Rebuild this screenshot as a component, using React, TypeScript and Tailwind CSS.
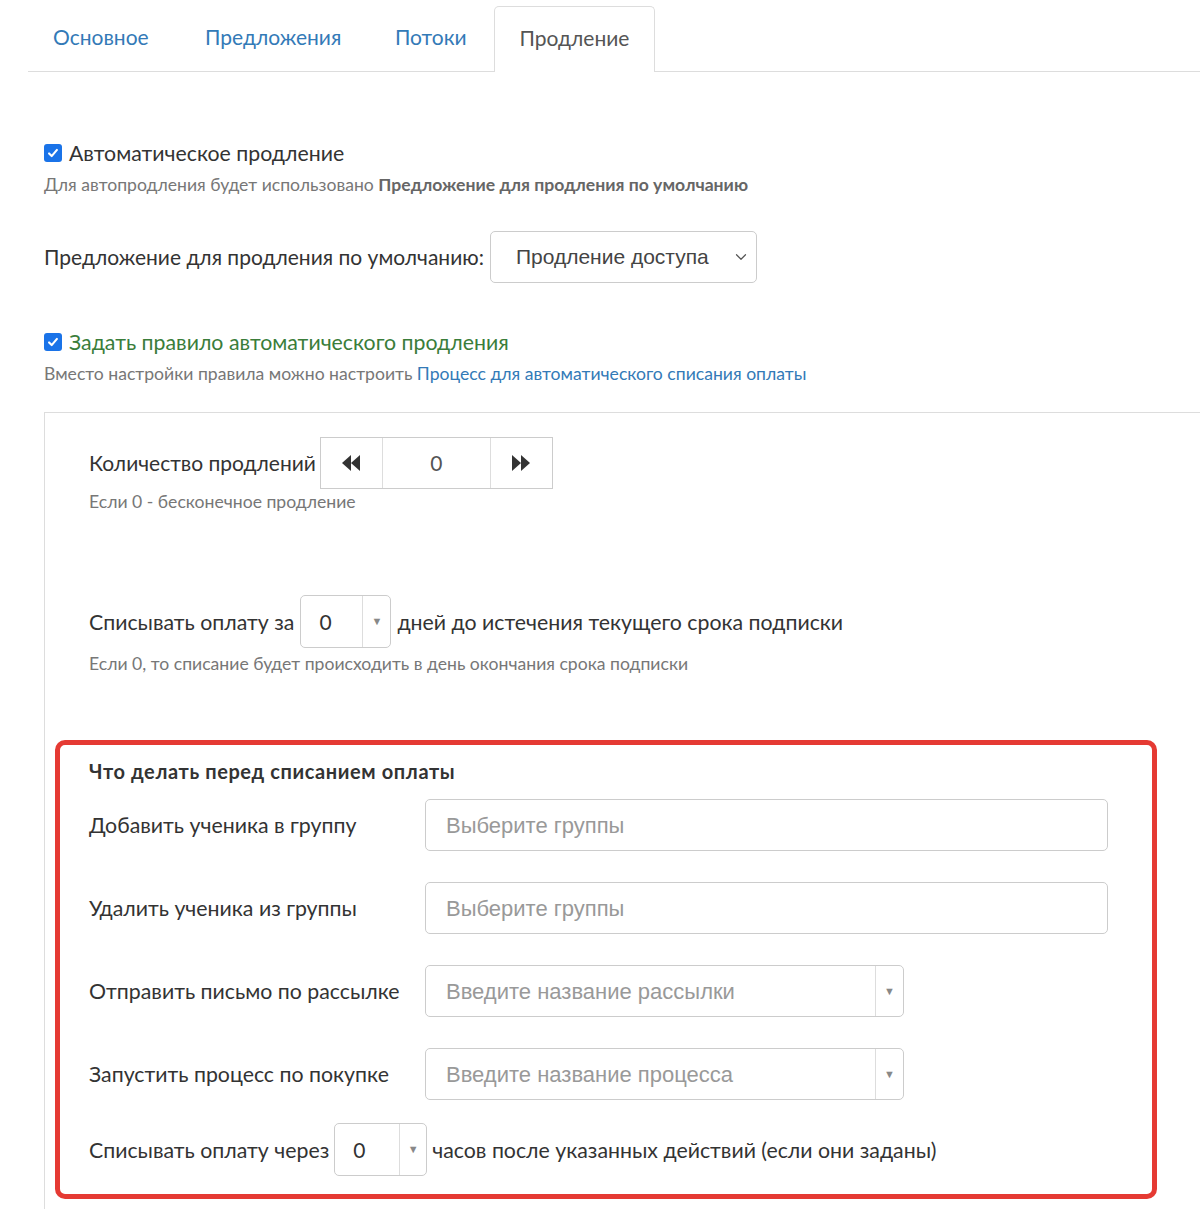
import { ChevronDown } from "lucide-react";

const FONT = { fontFamily: "Lato, 'Noto Sans', sans-serif" };
const ARIAL = { fontFamily: "'Liberation Sans', Arial, sans-serif" };

function Check() {
  return (
    <span className="inline-flex h-[18px] w-[18px] shrink-0 items-center justify-center rounded-[3px] bg-[#1a73e8]">
      <svg viewBox="0 0 16 16" className="h-[14px] w-[14px]" fill="none" stroke="white" strokeWidth="2.4" strokeLinecap="round" strokeLinejoin="round">
        <path d="M3.5 8.5l3 3 6-7" />
      </svg>
    </span>
  );
}

function Caret() {
  return <span className="text-[11px] text-[#888]">▼</span>;
}

function NumSelect({ w, divider }: { w: string; divider: string }) {
  return (
    <div className={`flex h-[53px] ${w} shrink-0 items-stretch rounded-[5px] border border-[#ccc] bg-white`}>
      <div className={`flex ${divider} items-center pl-[18px] text-[21px] text-[#333]`}>0</div>
      <div className="flex flex-1 items-center justify-center border-l border-[#ddd]">
        <Caret />
      </div>
    </div>
  );
}

function Row({ label, placeholder, narrow }: { label: string; placeholder: string; narrow?: boolean }) {
  return (
    <div className="flex items-center">
      <div className="w-[336px] text-[21.3px] leading-[30px] text-[#333]">{label}</div>
      <div className={`flex h-[52px] ${narrow ? "w-[479px]" : "w-[683px]"} items-stretch rounded-[5px] border border-[#ccc] bg-white`}>
        <div className="flex flex-1 items-center pl-[20px] text-[22px] text-[#999]" style={ARIAL}>
          {placeholder}
        </div>
        {narrow && (
          <div className="flex w-[28px] items-center justify-center border-l border-[#ddd]">
            <Caret />
          </div>
        )}
      </div>
    </div>
  );
}

export default function App() {
  return (
    <div className="min-h-[1209px] w-[1200px] overflow-hidden bg-white" style={FONT}>
      {/* tabs */}
      <div className="ml-[28px] flex h-[72px] items-end border-b border-[#ddd] pl-[25px]">
        <div className="flex h-[65px] items-center pb-[4px] text-[21px] text-[#337ab7]">
          <span className="w-[152px]">Основное</span>
          <span className="w-[190px]">Предложения</span>
          <span className="w-[99px]">Потоки</span>
        </div>
        <div className="-mb-px flex h-[66px] w-[161px] items-center justify-center rounded-t-[5px] border border-b-0 border-[#ddd] bg-white pb-[3px] text-[21px] text-[#555]">
          Продление
        </div>
      </div>

      <div className="pl-[44px]">
        <div className="mt-[66px] flex h-[30px] items-center gap-[7px]">
          <Check />
          <span className="text-[21.3px] leading-[30px] text-[#333]">Автоматическое продление</span>
        </div>
        <div className="mt-[5px] text-[17.6px] leading-[24px] text-[#777]">
          Для автопродления будет использовано <b className="font-bold text-[#666]">Предложение для продления по умолчанию</b>
        </div>

        <div className="mt-[34px] flex items-center gap-[6px]">
          <span className="text-[21px] leading-[30px] text-[#333]">Предложение для продления по умолчанию:</span>
          <div className="flex h-[52px] w-[267px] items-center justify-between rounded-[5px] border border-[#ccc] pl-[25px] pr-[6px] text-[21px] text-[#444]" style={ARIAL}>
            <span>Продление доступа</span>
            <ChevronDown className="h-[18px] w-[18px] text-[#555]" strokeWidth={1.6} />
          </div>
        </div>

        <div className="mt-[44px] flex h-[30px] items-center gap-[7px]">
          <Check />
          <span className="text-[21.3px] leading-[30px] text-[#3a7d3a]">Задать правило автоматического продления</span>
        </div>
        <div className="mt-[5px] text-[17.6px] leading-[24px] text-[#777]">
          Вместо настройки правила можно настроить <span className="text-[#337ab7]">Процесс для автоматического списания оплаты</span>
        </div>

        {/* rule panel */}
        <div className="mt-[26px] border-l border-t border-[#ddd] pb-[30px]">
          <div className="pl-[44px] pt-[24px]">
            <div className="flex items-center gap-[4px]">
              <span className="text-[21px] leading-[30px] text-[#333]">Количество продлений</span>
              <div className="flex h-[52px] items-stretch border border-[#ccc]">
                <div className="flex w-[61px] items-center justify-center text-[#333]">
                  <svg viewBox="0 0 20 20" className="h-[20px] w-[20px]" fill="currentColor">
                    <path d="M10 2L1 10l9 8z M19 2l-9 8 9 8z" />
                  </svg>
                </div>
                <div className="flex w-[109px] items-center justify-center border-x border-[#ddd] text-[21px] text-[#555]">0</div>
                <div className="flex w-[61px] items-center justify-center text-[#333]">
                  <svg viewBox="0 0 20 20" className="h-[20px] w-[20px]" fill="currentColor">
                    <path d="M1 2l9 8-9 8z M10 2l9 8-9 8z" />
                  </svg>
                </div>
              </div>
            </div>
            <div className="mt-[1px] text-[17.6px] leading-[24px] text-[#777]">Если 0 - бесконечное продление</div>

            <div className="mt-[81px] flex items-center gap-[6px]">
              <span className="text-[21.3px] leading-[30px] text-[#333]">Списывать оплату за</span>
              <NumSelect w="w-[91px]" divider="w-[61px]" />
              <span className="text-[21.3px] leading-[30px] text-[#333]">дней до истечения текущего срока подписки</span>
            </div>
            <div className="mt-[4px] text-[17.6px] leading-[24px] text-[#777]">Если 0, то списание будет происходить в день окончания срока подписки</div>
          </div>

          {/* highlighted block */}
          <div className="ml-[10px] mt-[64px] w-[1102px] rounded-[10px] border-[5px] border-[#e53a33] pb-[18px] pl-[29px] pt-[14px]">
            <div className="text-[20px] font-bold leading-[24px] tracking-[0.6px] text-[#333]">Что делать перед списанием оплаты</div>
            <div className="mt-[16px] flex flex-col gap-[31px]">
              <Row label="Добавить ученика в группу" placeholder="Выберите группы" />
              <Row label="Удалить ученика из группы" placeholder="Выберите группы" />
              <Row label="Отправить письмо по рассылке" placeholder="Введите название рассылки" narrow />
              <Row label="Запустить процесс по покупке" placeholder="Введите название процесса" narrow />
            </div>
            <div className="mt-[23px] flex items-center gap-[5px]">
              <span className="text-[21.3px] leading-[30px] text-[#333]">Списывать оплату через</span>
              <NumSelect w="w-[93px]" divider="w-[64px]" />
              <span className="text-[21.3px] leading-[30px] text-[#333]">часов после указанных действий (если они заданы)</span>
            </div>
          </div>
        </div>
      </div>
    </div>
  );
}
